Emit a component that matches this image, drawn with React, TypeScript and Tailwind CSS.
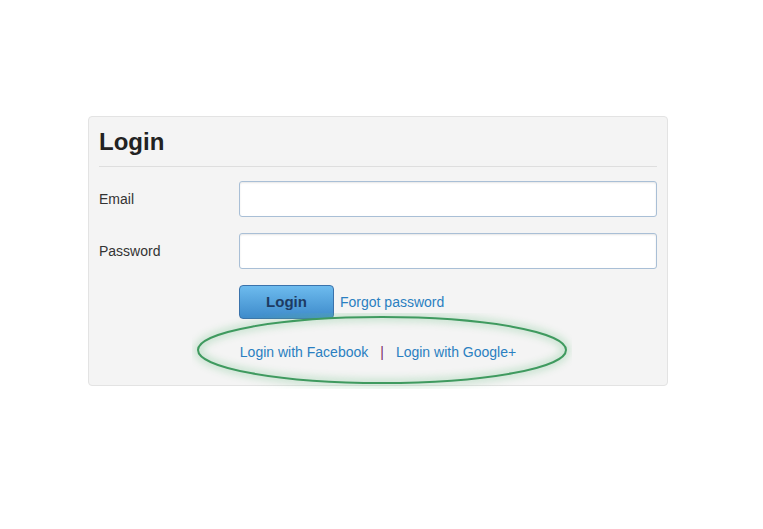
import React from "react";

export default function App() {
  return (
    <main className="min-h-screen w-full bg-white font-['Liberation_Sans',Arial,sans-serif] text-[#333]">
      <div className="pt-[116px] pl-[88px]">
        <div className="relative w-[580px] h-[270px] rounded-[4px] border border-[#e3e3e3] bg-[#f4f4f4] px-[10px]">
          <h1 className="pt-[10px] pb-[9px] text-[24px] leading-[30px] font-bold text-[#222]">Login</h1>
          <div className="border-t border-[#dedede]" />

          <div className="mt-[14px] flex items-center">
            <label className="w-[140px] text-[14px]">Email</label>
            <input type="email" className="h-[36px] w-[418px] rounded-[3px] border border-[#a9bfd6] bg-white shadow-[inset_0_1px_2px_rgba(0,0,0,0.1)]" />
          </div>
          <div className="mt-[16px] flex items-center">
            <label className="w-[140px] text-[14px]">Password</label>
            <input type="password" className="h-[36px] w-[418px] rounded-[3px] border border-[#a9bfd6] bg-white shadow-[inset_0_1px_2px_rgba(0,0,0,0.1)]" />
          </div>

          <div className="mt-[16px] flex items-center pl-[140px]">
            <button className="h-[34px] w-[95px] rounded-[4px] border border-[#3a72ab] bg-gradient-to-b from-[#6dbbee] to-[#3e8bcb] text-[15px] font-bold text-[#1d3b63]">
              Login
            </button>
            <a className="ml-[6px] text-[14px] text-[#2a7fc1]">Forgot password</a>
          </div>

          <div className="mt-[23px] flex justify-center items-center text-[14px] text-[#2a7fc1]">
            <a>Login with Facebook</a>
            <span className="mx-[12px] text-[#7b2e6b]">|</span>
            <a>Login with Google+</a>
          </div>

          <svg className="absolute left-[103px] top-[196px] pointer-events-none" width="380" height="76" viewBox="0 0 380 76">
            <defs>
              <filter id="glow" x="-10%" y="-30%" width="120%" height="160%">
                <feGaussianBlur stdDeviation="4" />
              </filter>
            </defs>
            <ellipse cx="190" cy="37" rx="184" ry="33" fill="none" stroke="#6cbf84" strokeWidth="6" opacity="0.45" filter="url(#glow)" />
            <ellipse cx="190" cy="37" rx="184" ry="33" fill="none" stroke="#3f9a5f" strokeWidth="2" />
          </svg>
        </div>
      </div>
    </main>
  );
}
